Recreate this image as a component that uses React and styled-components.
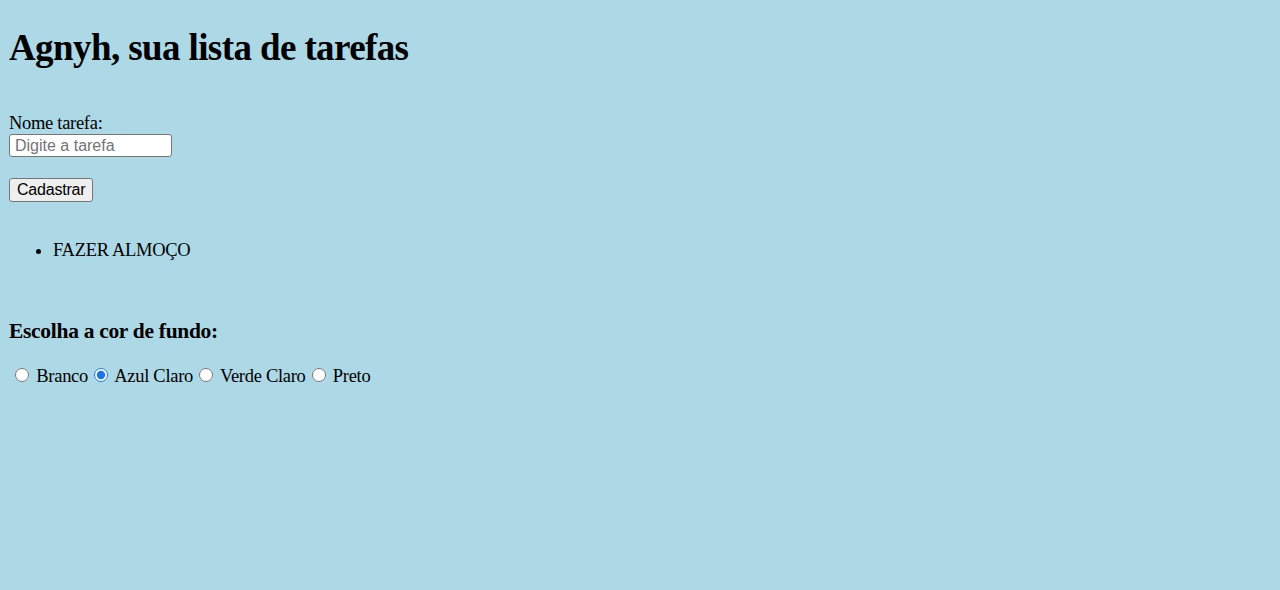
import React, { useState } from 'react';
import styled, { createGlobalStyle } from 'styled-components';

const colors = {
  branco: '#ffffff',
  azul: '#add8e6',
  verde: '#90ee90',
  preto: '#000000',
};

const options = [
  { id: 'branco', label: 'Branco' },
  { id: 'azul', label: 'Azul Claro' },
  { id: 'verde', label: 'Verde Claro' },
  { id: 'preto', label: 'Preto' },
];

const App = () => {
  const [cor, setCor] = useState('azul');
  const [tarefa, setTarefa] = useState('');
  const [tarefas, setTarefas] = useState(['FAZER ALMOÇO']);

  const cadastrar = (e) => {
    e.preventDefault();
    if (!tarefa.trim()) return;
    setTarefas([...tarefas, tarefa.toUpperCase()]);
    setTarefa('');
  };

  return (
    <>
      <GlobalStyle $bg={colors[cor]} />
      <Page>
        <Title>Agnyh, sua lista de tarefas</Title>

        <Form onSubmit={cadastrar}>
          <Label htmlFor="tarefa">Nome tarefa:</Label>
          <Input
            id="tarefa"
            placeholder="Digite a tarefa"
            value={tarefa}
            onChange={(e) => setTarefa(e.target.value)}
          />
          <Button type="submit">Cadastrar</Button>
        </Form>

        <List>
          {tarefas.map((t, i) => (
            <Item key={i}>{t}</Item>
          ))}
        </List>

        <Subtitle>Escolha a cor de fundo:</Subtitle>
        <Radios>
          {options.map((o) => (
            <Option key={o.id}>
              <Radio
                type="radio"
                name="cor"
                checked={cor === o.id}
                onChange={() => setCor(o.id)}
              />{' '}
              {o.label}
            </Option>
          ))}
        </Radios>
      </Page>
    </>
  );
};

// --- Styled Components ---

const GlobalStyle = createGlobalStyle`
  html, body {
    margin: 0;
    padding: 0;
    min-height: 100%;
    background: ${(p) => p.$bg};
  }
  body {
    font-family: 'Liberation Serif', 'Times New Roman', serif;
    font-size: 18.5px;
    letter-spacing: -0.3px;
    color: #000;
  }
`;

const Page = styled.div`
  padding: 25px 9px 0;
`;

const Title = styled.h1`
  margin: 0;
  font-size: 37px;
  line-height: 45px;
  letter-spacing: -0.6px;
  font-weight: bold;
`;

const Form = styled.form`
  display: flex;
  flex-direction: column;
  align-items: flex-start;
  margin-top: 42px;
`;

const Label = styled.label`
  display: block;
  line-height: 22px;
`;

const Input = styled.input`
  box-sizing: border-box;
  width: 163px;
  height: 23px;
  padding: 1px 5px;
  border: 1px solid #767676;
  border-radius: 3px;
  background: #fff;
  font-family: 'Liberation Sans', Arial, sans-serif;
  font-size: 16px;
  letter-spacing: 0;
  &::placeholder {
    color: #757575;
  }
`;

const Button = styled.button`
  box-sizing: border-box;
  margin-top: 21px;
  height: 24px;
  padding: 1px 7px;
  border: 1px solid #767676;
  border-radius: 3px;
  background: #efefef;
  color: #000;
  font-family: 'Liberation Sans', Arial, sans-serif;
  font-size: 16px;
  letter-spacing: -0.2px;
  line-height: 20px;
`;

const List = styled.ul`
  margin: 38px 0 0;
  padding-left: 44px;
`;

const Item = styled.li`
  line-height: 21px;
`;

const Subtitle = styled.h3`
  margin: 58px 0 0;
  font-size: 21.5px;
  line-height: 25px;
  font-weight: bold;
`;

const Radios = styled.div`
  margin-top: 21px;
  line-height: 21px;
`;

const Option = styled.label``;

const Radio = styled.input`
  width: 14px;
  height: 14px;
  margin: 3px 3px 0 6px;
  accent-color: #1a73e8;
`;

export default App;
